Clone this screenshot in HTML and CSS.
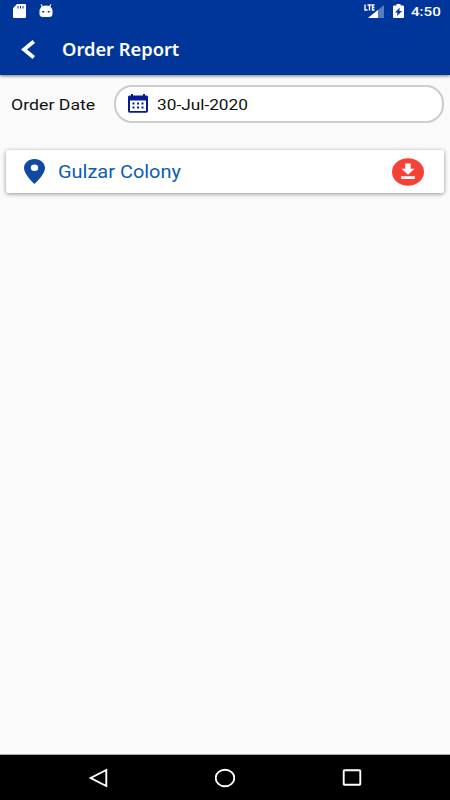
FILE: index.html
```html
<!DOCTYPE html>
<html lang="en">
<head>
<meta charset="utf-8">
<title>Order Report</title>
<link rel="stylesheet" href="styles.css">
</head>
<body>
<div class="screen">
  <header class="top">
    <div class="status">
      <svg class="sd" viewBox="0 0 13 14"><path fill="#fff" fill-rule="evenodd" d="M4 0h8q1 0 1 1v12q0 1-1 1H1q-1 0-1-1V4.2zM4.500 2v2.500h1V2zM7 2v2.500h1V2zM9.500 2v2.500h1V2z"/></svg>
      <svg class="droid" viewBox="0 0 14 14"><path fill="#fff" fill-rule="evenodd" d="M2.2 0l1.700 2q3-1 6.200 0L11.800 0l.6.5-1 2.200Q13 4 13 5.500H1Q1 4 2.600 2.700L1.600.5zM.5 5.500h13v5Q13 13 10 13H4Q1 13 .5 10.500zM3.300 7v1.400h2V7zM8.700 7v1.400h2V7z"/></svg>
      <svg class="signal" viewBox="0 0 20 15"><path fill="#fff" opacity=".35" d="M20 1v13H4z"/><path fill="#fff" d="M14 6v8H4z"/><path fill="none" stroke="#00369a" stroke-width="3" d="M1 1v5h2M4 1h4M6 1v5.500M11 1H9v5h2M9 3.500h2"/><path fill="none" stroke="#fff" stroke-width="1.400" d="M1 .500v5.500h2.500M3.500 1h4M5.500 1v5.500M10.500 1H8.500v5h2M8.500 3.500h2"/></svg>
      <svg class="battery" viewBox="0 0 11 15"><path fill="#fff" fill-rule="evenodd" d="M3.500 0h4v1.500H10q1 0 1 1V13q0 1-1 1H1q-1 0-1-1V2.500q0-1 1-1h2.500zM6.800 3.500L2 8.500h2.500L4 12l5-5H6.300z"/></svg>
      <span class="clock"><span class="stretch">4:50</span></span>
    </div>
    <div class="bar">
      <svg class="back" viewBox="0 0 14 19"><path fill="none" stroke="#fff" stroke-width="3.800" d="M12.800 1.500L3 9.500l9.800 8"/></svg>
      <h1 class="title"><span class="stretch">Order Report</span></h1>
    </div>
  </header>
  <main class="content">
    <div class="date-row">
      <div class="label"><span class="stretch">Order Date</span></div>
      <div class="field">
        <svg class="calendar" viewBox="0 0 20 19"><path fill="#051c93" fill-rule="evenodd" d="M3 0h2v1.500h10V0h2v1.500h1.500q1.500 0 1.500 1.500v14q0 1.700-1.700 1.700H1.700Q0 18.700 0 17V3q0-1.500 1.500-1.500H3zM2 6.500V17h16V6.500z"/><path fill="#051c93" d="M4.500 8.500h2v2h-2zM9 8.500h2v2H9zM13.500 8.500h2v2h-2zM4.500 12.500h2v2h-2zM9 12.500h2v2H9zM13.500 12.500h2v2h-2z"/></svg>
        <span class="date"><span class="stretch">30-Jul-2020</span></span>
      </div>
    </div>
    <div class="card">
      <svg class="pin" viewBox="0 0 21 25"><path fill="#1049a0" fill-rule="evenodd" d="M10.500 0C4.500 0 0 4 0 9c0 6.500 10.500 16 10.500 16S21 15.500 21 9c0-5-4.500-9-10.500-9zm0 5.600a3.700 3.200 0 1 1 0 6.400 3.700 3.200 0 1 1 0-6.400z"/></svg>
      <span class="place"><span class="stretch">Gulzar Colony</span></span>
      <svg class="download" viewBox="0 0 32 28"><ellipse cx="16" cy="14" rx="16" ry="13.800" fill="#f44336"/><path fill="#fff" d="M13.200 5.500h5.500v5.300h3.800L16 16.700l-6.500-5.900h3.700zM9.200 18.200h13.600V21H9.200z"/></svg>
    </div>
  </main>
  <nav class="nav">
    <svg viewBox="0 0 20 20"><path d="M17.300 2v16L1.700 10z"/></svg>
    <svg viewBox="0 0 20 20"><ellipse cx="10" cy="10" rx="9.300" ry="8.300"/></svg>
    <svg viewBox="0 0 20 20"><rect x="1.700" y="2.200" width="16.600" height="14.600" rx=".7"/></svg>
  </nav>
</div>
</body>
</html>
```
FILE: styles.css
```css
* { box-sizing: border-box; }
body { margin: 0; font-family: Roboto, "Noto Sans", sans-serif; }
svg { display: block; flex: none; }
.screen { width: 450px; height: 800px; display: flex; flex-direction: column; background: #fafafa; overflow: hidden; }
.top { height: 75px; background: #00369a; box-shadow: 0 1px 3px rgba(0, 0, 0, .55); color: #fff; }
.status { height: 24px; padding: 4px 0 0 13px; display: flex; align-items: flex-start; }
.sd { width: 13px; height: 14px; }
.droid { width: 14px; height: 14px; margin-left: 13px; }
.signal { width: 20px; height: 15px; margin-left: 311px; }
.battery { width: 11px; height: 15px; margin-left: 9px; }
.stretch { display: inline-block; transform: scaleX(1.15); transform-origin: left center; white-space: nowrap; }
.clock { font-size: 13.500px; font-weight: 500; line-height: 15px; margin-left: 7px; }
.clock .stretch { transform: scaleX(1.12); }
.bar { height: 51px; display: flex; align-items: center; padding-left: 21px; }
.back { width: 14px; height: 19px; }
.title { margin: 0 0 0 27px; font-family: "Noto Sans", sans-serif; font-size: 17px; font-weight: 600; line-height: 24px; }
.title .stretch { transform: scaleX(1.075); }
.content { flex: 1; padding: 10px 6px 0; }
.date-row { display: flex; align-items: center; height: 38px; }
.label { width: 108px; padding: 2px 0 0 5px; font-size: 15px; color: #111; }
.label .stretch { transform: scaleX(1.18); }
.field { flex: 1; height: 38px; border: 2px solid #ccc; border-radius: 18px; background: #fff; display: flex; align-items: center; padding-left: 12px; }
.calendar { width: 20px; height: 19px; margin-top: -1px; }
.date { margin-left: 9px; padding-top: 2px; font-size: 15px; color: #111; }
.card { margin-top: 27px; height: 43px; background: #fff; border-radius: 2px; box-shadow: 0 1px 4px rgba(0, 0, 0, .42); display: flex; align-items: center; padding: 0 20px 0 18px; }
.pin { width: 21px; height: 25px; }
.place { flex: 1; margin-left: 13px; padding-top: 1px; font-size: 17.500px; color: #0d5cb6; }
.place .stretch { transform: scaleX(1.14); }
.download { width: 32px; height: 28px; }
.nav { height: 46px; background: #000; border-top: 1px solid #aaa; display: flex; justify-content: center; align-items: center; gap: 107px; }
.nav svg { width: 20px; height: 20px; fill: none; stroke: #fff; stroke-width: 1.900; }
.nav svg:first-child { transform: translateX(1px); }
```
